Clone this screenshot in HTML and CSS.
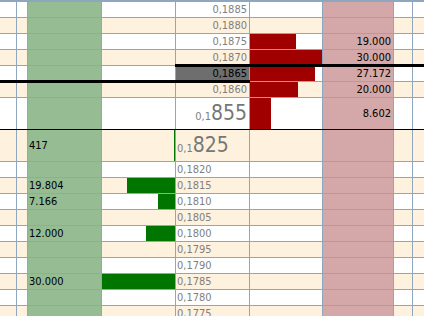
FILE: index.html
```html
<!DOCTYPE html>
<html lang="tr">
<head>
  <meta charset="UTF-8" />
  <meta name="viewport" content="width=device-width, initial-scale=1" />
  <title>Derinlik</title>
  <link rel="stylesheet" href="styles.css">
</head>
<body>
  <div id="ladder" class="ladder"></div>

  <script>
    const ladder = document.getElementById("ladder");
    const MAX_VOL = 30000;

    // fiyat kademeleri (üstte satış, altta alış)
    const levels = [
      { price: "0,1885", side: "ask" },
      { price: "0,1880", side: "ask" },
      { price: "0,1875", side: "ask", ask: 19000 },
      { price: "0,1870", side: "ask", ask: 30000 },
      { price: "0,1865", side: "ask", ask: 27172, last: true },
      { price: "0,1860", side: "ask", ask: 20000 },
      { price: "0,1855", side: "ask", ask: 8602, big: true },
      { price: "0,1825", side: "bid", bid: 417, big: true, cut: true },
      { price: "0,1820", side: "bid" },
      { price: "0,1815", side: "bid", bid: 19804 },
      { price: "0,1810", side: "bid", bid: 7166 },
      { price: "0,1805", side: "bid" },
      { price: "0,1800", side: "bid", bid: 12000 },
      { price: "0,1795", side: "bid" },
      { price: "0,1790", side: "bid" },
      { price: "0,1785", side: "bid", bid: 30000 },
      { price: "0,1780", side: "bid" },
      { price: "0,1775", side: "bid" }
    ];

    function fmt(n) {
      return String(n).replace(/\B(?=(\d{3})+(?!\d))/g, ".");
    }

    function bar(vol, max, cls) {
      if (!vol) return "";
      const w = Math.max(1, Math.round(vol / MAX_VOL * max));
      return `<div class="bar ${cls}" style="width:${w}px"></div>`;
    }

    function priceHtml(lv) {
      if (!lv.big) return lv.price;
      return `${lv.price.slice(0, 3)}<span class="big-digits">${lv.price.slice(3)}</span>`;
    }

    levels.forEach((lv, i) => {
      const row = document.createElement("div");
      let cls = "row";
      if (i % 2) cls += " alt";
      if (lv.big) cls += " big";
      if (lv.cut) cls += " cut";
      if (lv.last) cls += " mark-right";
      if (i > 0 && levels[i - 1].last) cls += " mark-left";
      row.className = cls;

      row.innerHTML = `
        <div class="cell col-a"></div>
        <div class="cell col-b"></div>
        <div class="cell col-bid">${lv.bid ? fmt(lv.bid) : ""}</div>
        <div class="cell col-bidbar">${bar(lv.bid, 73, "bar-bid")}</div>
        <div class="cell col-price ${lv.side}${lv.last ? " last" : ""}">${priceHtml(lv)}</div>
        <div class="cell col-askbar">${bar(lv.ask, 72, "bar-ask")}</div>
        <div class="cell col-ask">${lv.ask ? fmt(lv.ask) : ""}</div>
        <div class="cell col-h"></div>
        <div class="cell col-i"></div>
      `;
      ladder.appendChild(row);
    });
  </script>
</body>
</html>
```

FILE: styles.css
```css
body {
  margin: 0;
  overflow: hidden;
  background: #fff;
  font-family: "DejaVu Sans Condensed", "DejaVu Sans", sans-serif;
  font-stretch: condensed;
  font-size: 11px;
  color: #000;
}
.ladder {
  border-top: 1px solid #8ea6be;
}
.row {
  position: relative;
  display: flex;
  box-sizing: border-box;
  height: 16px;
  line-height: 15px;
  border-top: 1px solid #8ea6be;
  background: #fff;
}
.row.alt {
  background: #fef1dd;
}
.row.big {
  height: 32px;
  line-height: 31px;
}
.row.cut {
  border-top-color: #000;
}
.row.mark-right::before,
.row.mark-left::before {
  content: "";
  position: absolute;
  top: -2px;
  height: 3px;
  background: #000;
}
.row.mark-right::before {
  left: 175px;
  right: 0;
}
.row.mark-left::before {
  left: 0;
  width: 250px;
}
.cell {
  flex: none;
  box-sizing: border-box;
  border-right: 1px solid #8ea6be;
  overflow: hidden;
  white-space: nowrap;
}
.col-a { width: 17px; }
.col-b { width: 11px; }
.col-bid {
  width: 74px;
  padding-left: 1px;
  background: #95bc92;
}
.col-bidbar {
  width: 74px;
  display: flex;
  justify-content: flex-end;
}
.col-price {
  width: 74px;
  color: #7f7f7f;
}
.col-price.ask {
  text-align: right;
  padding-right: 2px;
}
.col-price.bid {
  padding-left: 1px;
}
.col-price.last {
  background: #6e6e6e;
  color: #000;
}
.col-askbar {
  width: 73px;
  display: flex;
}
.col-ask {
  width: 71px;
  text-align: right;
  padding-right: 2px;
  background: #d4a8a8;
}
.col-h { width: 19px; }
.col-i {
  width: 11px;
  border-right: none;
}
.bar {
  height: 100%;
}
.bar-bid {
  background: #007500;
}
.bar-ask {
  background: #a00000;
}
.big-digits {
  font-size: 21px;
  color: #777;
}
```
